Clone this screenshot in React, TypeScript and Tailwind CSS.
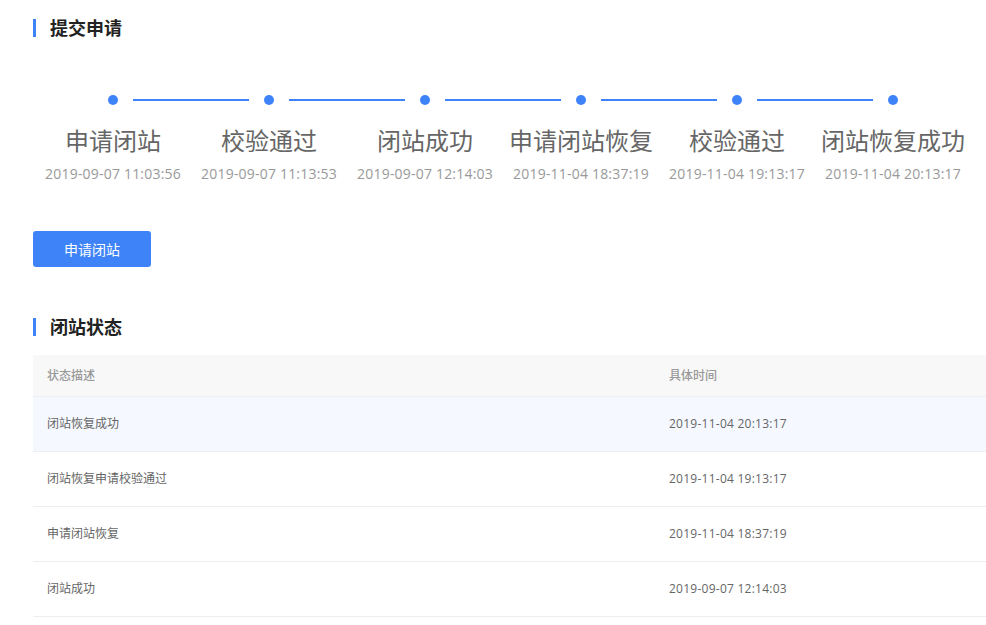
const steps = [
  { title: "申请闭站", time: "2019-09-07 11:03:56" },
  { title: "校验通过", time: "2019-09-07 11:13:53" },
  { title: "闭站成功", time: "2019-09-07 12:14:03" },
  { title: "申请闭站恢复", time: "2019-11-04 18:37:19" },
  { title: "校验通过", time: "2019-11-04 19:13:17" },
  { title: "闭站恢复成功", time: "2019-11-04 20:13:17" },
];

const rows = [
  { desc: "闭站恢复成功", time: "2019-11-04 20:13:17" },
  { desc: "闭站恢复申请校验通过", time: "2019-11-04 19:13:17" },
  { desc: "申请闭站恢复", time: "2019-11-04 18:37:19" },
  { desc: "闭站成功", time: "2019-09-07 12:14:03" },
];

function SectionTitle({ children }: { children: string }) {
  return (
    <div className="flex h-[18px] items-center">
      <div className="h-[18px] w-[3px] bg-[#3e84f8]" />
      <h2 className="ml-[14px] text-[18px] font-bold leading-[18px] text-[#222]">
        {children}
      </h2>
    </div>
  );
}

export default function App() {
  return (
    <div
      className="min-h-[625px] overflow-hidden bg-white pl-[33px] pt-[19px]"
      style={{ fontFamily: '"Open Sans", "Noto Sans CJK SC", sans-serif' }}
    >
      <SectionTitle>提交申请</SectionTitle>

      {/* Steps */}
      <div className="ml-[2px] mt-[58px] flex">
        {steps.map((step, i) => (
          <div key={i} className="flex w-[156px] flex-col items-center">
            <div className="relative flex h-[10px] w-full justify-center">
              <div className="h-[10px] w-[10px] rounded-full bg-[#3e84f8]" />
              {i < steps.length - 1 && (
                <div className="absolute top-[4px] left-[calc(50%+20px)] h-[2px] w-[116px] bg-[#3e84f8]" />
              )}
            </div>
            <div className="mt-[20px] whitespace-nowrap text-[24px] leading-[32px] text-[#666]">
              {step.title}
            </div>
            <div className="mt-[7px] whitespace-nowrap text-[14px] leading-[20px] tracking-[0.2px] text-[#999]">
              {step.time}
            </div>
          </div>
        ))}
      </div>

      <button className="mt-[47px] h-[36px] w-[118px] rounded-[3px] bg-[#3e84f8] text-[14px] text-white">
        申请闭站
      </button>

      <div className="mt-[51px]">
        <SectionTitle>闭站状态</SectionTitle>
      </div>

      {/* Status table */}
      <div className="mt-[19px] w-[970px] text-[12px]">
        <div className="flex h-[42px] items-center border-b border-[#eee] bg-[#f8f8f8] font-medium text-[#999]">
          <div className="w-[636px] pl-[14px]">状态描述</div>
          <div>具体时间</div>
        </div>
        {rows.map((row, i) => (
          <div
            key={i}
            className={`flex h-[55px] items-center border-b border-[#eee] text-[#666] ${
              i === 0 ? "bg-[#f5f8fe]" : "bg-white"
            }`}
          >
            <div className="w-[636px] pl-[14px]">{row.desc}</div>
            <div className="tracking-[0.25px]">{row.time}</div>
          </div>
        ))}
      </div>
    </div>
  );
}
